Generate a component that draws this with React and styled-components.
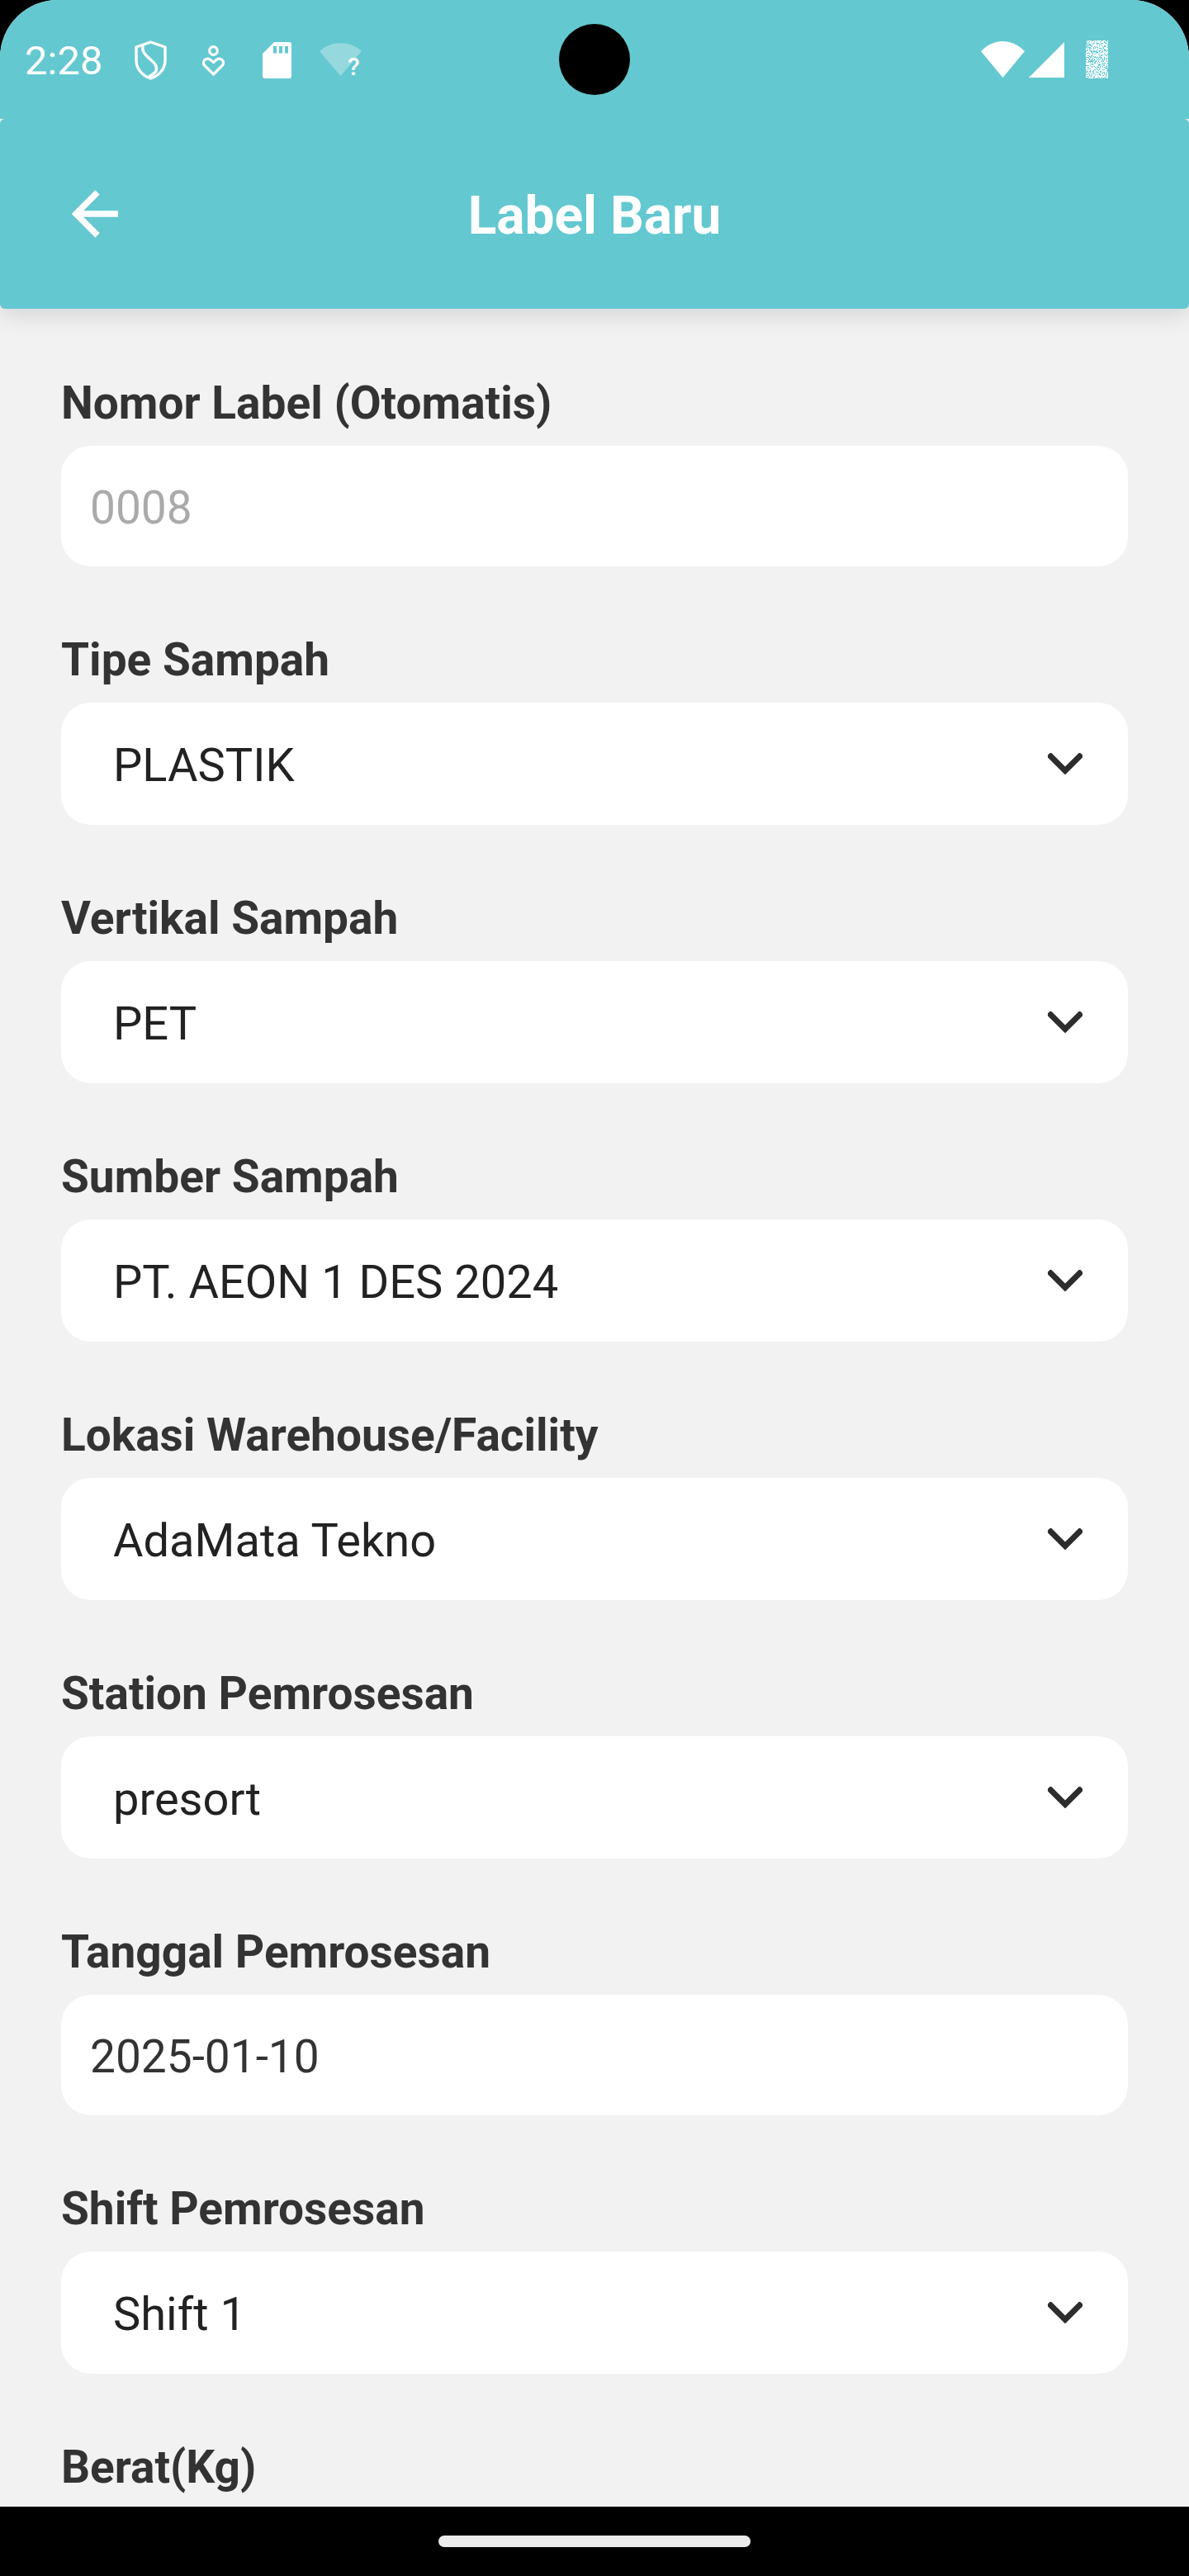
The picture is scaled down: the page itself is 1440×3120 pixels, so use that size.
import styled, { createGlobalStyle } from 'styled-components'

const TEAL = '#64c8d0'

const Global = createGlobalStyle`
  html, body {
    margin: 0;
    padding: 0;
    background: #000;
  }
  * {
    box-sizing: border-box;
  }
`
const Phone = styled.div`
  display: flex;
  flex-direction: column;
  width: 1440px;
  height: 3120px;
  overflow: hidden;
  background: #000;
  font-family: Roboto, "Liberation Sans", sans-serif;
`
const Screen = styled.div`
  flex: 1;
  min-height: 0;
  display: flex;
  flex-direction: column;
  overflow: hidden;
  background: #f2f2f2;
  border-radius: 70px 70px 0 0;
`
const StatusBar = styled.div`
  position: relative;
  z-index: 2;
  display: flex;
  align-items: flex-start;
  justify-content: space-between;
  height: 144px;
  flex-shrink: 0;
  background: ${TEAL};
  padding: 49px 98px 0 30px;
`
const StatusLeft = styled.div`
  display: flex;
  align-items: flex-start;
`
const Clock = styled.span`
  width: 133px;
  color: #fff;
  font-size: 49px;
  line-height: 50px;
`
const StatusRight = styled.div`
  display: flex;
  align-items: flex-start;
`
const Camera = styled.div`
  position: absolute;
  left: 677px;
  top: 29px;
  width: 86px;
  height: 86px;
  border-radius: 50%;
  background: #000;
`
const AppBar = styled.header`
  position: relative;
  z-index: 1;
  display: flex;
  align-items: center;
  justify-content: center;
  height: 230px;
  flex-shrink: 0;
  background: ${TEAL};
  border-radius: 6px;
  box-shadow: 0 8px 28px rgba(0, 0, 0, 0.12);
`
const BackButton = styled.button`
  position: absolute;
  left: 84px;
  top: 85px;
  width: 62px;
  height: 60px;
  padding: 0;
  border: 0;
  background: none;
`
const Title = styled.h1`
  margin: 6px 0 0;
  color: #fff;
  font-size: 64px;
  line-height: 72px;
  font-weight: 700;
`
const Form = styled.main`
  flex: 1;
  min-height: 0;
  overflow: hidden;
  padding: 80.5px 74px 0;
`
const Field = styled.div`
  display: flex;
  flex-direction: column;
  margin-bottom: 80px;
`
const Label = styled.label`
  margin-bottom: 19px;
  color: #333;
  font-size: 55px;
  line-height: 66px;
  font-weight: 700;
`
const TextBox = styled.input`
  width: 100%;
  height: 146px;
  padding: 5px 35px 0;
  border: 0;
  border-radius: 36px;
  outline: none;
  background: #fff;
  color: #333;
  font-family: inherit;
  font-size: 55px;
  &::placeholder {
    color: #aaa;
    opacity: 1;
  }
`
const SelectBox = styled.div`
  display: flex;
  align-items: center;
  justify-content: space-between;
  height: 148px;
  padding: 0 55px 0 63px;
  border-radius: 36px;
  background: #fff;
  color: #222;
  font-size: 56px;
`
const SelectValue = styled.span`
  padding-top: 5px;
`
const HomeBar = styled.div`
  display: flex;
  justify-content: center;
  height: 84px;
  flex-shrink: 0;
  padding-top: 35px;
  background: #000;
`
const HomePill = styled.div`
  width: 378px;
  height: 14px;
  border-radius: 7px;
  background: #ebebeb;
`

const ShieldIcon = () => (
  <svg width="39" height="48" viewBox="0 0 39 48" style={{ marginRight: 43 }} fill="none" stroke="#fff" strokeWidth="3.4">
    <path d="M19.5 2 L37 8 V24 C37 35 29 43 19.5 46 C10 43 2 35 2 24 V8 Z" strokeLinejoin="round" />
    <path d="M10 6.5 C8.5 14 13 17 18 22 C24 27 28 31 26 37 C24 40 21 42 17 44" />
  </svg>
)

const PersonHeartIcon = () => (
  <svg width="27" height="37" viewBox="0 0 27 37" style={{ marginTop: 6, marginRight: 46 }} fill="none" stroke="#fff" strokeWidth="3.2">
    <circle cx="13.5" cy="6.5" r="4.8" />
    <path d="M13.5 35 L2.5 24 C0.8 22 1.2 19 3 17.5 C5.5 15.5 8 16 10 17.5 L13.5 20.5 L17 17.5 C19 16 21.5 15.5 24 17.5 C25.8 19 26.2 22 24.5 24 Z" strokeLinejoin="round" />
  </svg>
)

const SdCardIcon = () => (
  <svg width="35" height="44" viewBox="0 0 35 44" style={{ marginTop: 2, marginRight: 34 }}>
    <path
      fill="#fff"
      fillRule="evenodd"
      d="M14 0 H32 A3 3 0 0 1 35 3 V41 A3 3 0 0 1 32 44 H3 A3 3 0 0 1 0 41 V14 Z M13 5 V13.5 H17 V5 Z M20 5 V13.5 H24 V5 Z M27 5 V13.5 H31 V5 Z"
    />
  </svg>
)

const WifiUnknownIcon = () => (
  <svg width="56" height="50" viewBox="0 0 56 50" style={{ marginTop: 3 }}>
    <path fill="#fff" fillOpacity="0.32" d="M0 10 C14 -3 37 -3 51 10 L25.5 40 Z" />
    <text x="34" y="39" fill="#fff" fontSize="30" fontWeight="500" fontFamily="Roboto, sans-serif">?</text>
  </svg>
)

const WifiIcon = () => (
  <svg width="54" height="44" viewBox="0 0 54 44" style={{ marginTop: 1 }}>
    <path fill="#fff" d="M0 12 C8 4 17 0 26.5 0 C36 0 45 4 53 12 L26.5 44 Z" />
  </svg>
)

const SignalIcon = () => (
  <svg width="43" height="43" viewBox="0 0 43 43" style={{ marginTop: 2, marginLeft: 4, marginRight: 26 }}>
    <path fill="#fff" d="M43 0 V43 H0 Z" />
  </svg>
)

// the battery is a noisy dither in the picture, so scatter teal pixels over a white block
const noiseCells = []
for (let y = 0; y < 46; y++) {
  for (let x = 0; x < 27; x++) {
    const hash = Math.sin(x * 12.9898 + y * 78.233) * 43758.5453
    if (hash - Math.floor(hash) < 0.34) noiseCells.push({ x, y })
  }
}

const BatteryIcon = () => (
  <svg width="27" height="46" viewBox="0 0 27 46" shapeRendering="crispEdges">
    <rect width="27" height="46" fill="#fff" fillOpacity="0.92" />
    {noiseCells.map((cell) => (
      <rect key={`${cell.x}-${cell.y}`} x={cell.x} y={cell.y} width="1" height="1" fill={TEAL} />
    ))}
  </svg>
)

const BackArrow = () => (
  <svg width="62" height="60" viewBox="0 0 62 60" fill="none" stroke="#fff" strokeWidth="7.5">
    <path d="M8 30 H59" />
    <path d="M34 4 L8 30 L34 56" />
  </svg>
)

const Chevron = () => (
  <svg width="42" height="26" viewBox="0 0 42 26" fill="none" stroke="#2d2d2d" strokeWidth="7" strokeLinecap="square">
    <path d="M3.5 4 L21 21.5 L38.5 4" />
  </svg>
)

const fields = [
  { label: 'Nomor Label (Otomatis)', placeholder: '0008' },
  { label: 'Tipe Sampah', select: 'PLASTIK' },
  { label: 'Vertikal Sampah', select: 'PET' },
  { label: 'Sumber Sampah', select: 'PT. AEON 1 DES 2024' },
  { label: 'Lokasi Warehouse/Facility', select: 'AdaMata Tekno' },
  { label: 'Station Pemrosesan', select: 'presort' },
  { label: 'Tanggal Pemrosesan', value: '2025-01-10' },
  { label: 'Shift Pemrosesan', select: 'Shift 1' },
  { label: 'Berat(Kg)', value: '' },
]

export default function App() {
  return (
    <Phone>
      <Global />
      <Screen>
        <StatusBar>
          <StatusLeft>
            <Clock>2:28</Clock>
            <ShieldIcon />
            <PersonHeartIcon />
            <SdCardIcon />
            <WifiUnknownIcon />
          </StatusLeft>
          <Camera />
          <StatusRight>
            <WifiIcon />
            <SignalIcon />
            <BatteryIcon />
          </StatusRight>
        </StatusBar>
        <AppBar>
          <BackButton aria-label="Kembali">
            <BackArrow />
          </BackButton>
          <Title>Label Baru</Title>
        </AppBar>
        <Form>
          {fields.map((field) => (
            <Field key={field.label}>
              <Label>{field.label}</Label>
              {field.select ? (
                <SelectBox>
                  <SelectValue>{field.select}</SelectValue>
                  <Chevron />
                </SelectBox>
              ) : (
                <TextBox readOnly placeholder={field.placeholder} value={field.value ?? ''} />
              )}
            </Field>
          ))}
        </Form>
      </Screen>
      <HomeBar>
        <HomePill />
      </HomeBar>
    </Phone>
  )
}
